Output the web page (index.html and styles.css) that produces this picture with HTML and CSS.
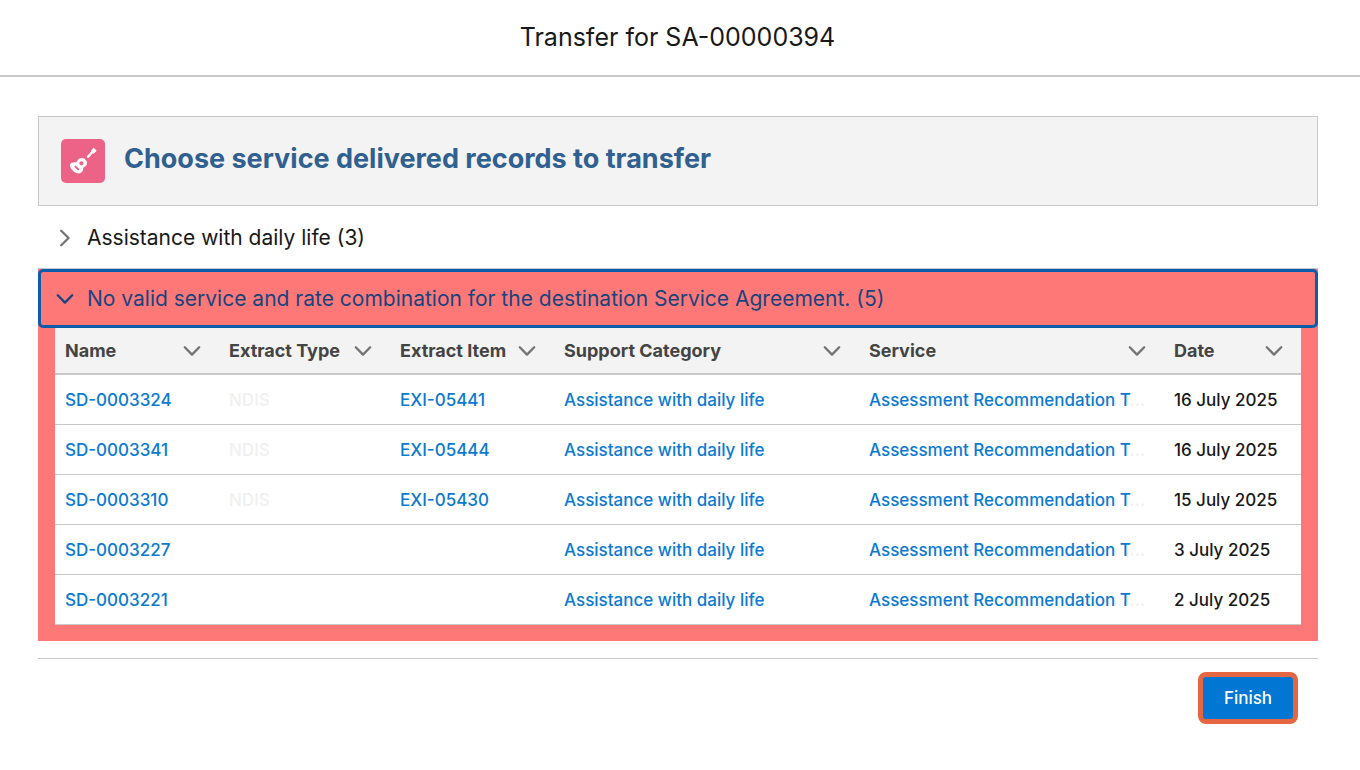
FILE: index.html
```html
<!DOCTYPE html>
<html lang="en">
<head>
<meta charset="utf-8">
<title>Transfer for SA-00000394</title>
<link rel="stylesheet" href="styles.css">
</head>
<body>
<svg class="defs" aria-hidden="true">
  <symbol id="chevron" viewBox="0 0 18 18"><path d="M1.800 5.200 9 12.600l7.200-7.400" fill="none" stroke="currentColor" stroke-width="2.300" stroke-linecap="round" stroke-linejoin="round"/></symbol>
</svg>
<header class="modal-header"><h1 class="modal-title">Transfer for SA-00000394</h1></header>
<main class="content">
  <div class="banner">
    <svg class="banner-icon" viewBox="0 0 44 44" aria-hidden="true">
      <path d="M27 17.800 31.800 12.500" fill="none" stroke="#fff" stroke-width="2.400" stroke-linecap="round"/>
      <path d="M30.300 12 32 9.600q.6-.6 1.200 0l1.600 1.700q.5.600-.1 1.200l-2.400 1.800Z" fill="#fff" stroke="#fff" stroke-width=".8" stroke-linejoin="round"/>
      <path fill-rule="evenodd" d="M16.400 21.800c.8-1.900 2.900-3 5-2.700 1.300.1 2.200.8 3 1.700 1 .9 1.700 2 1.600 3.300 0 1.800-1 3.300-2.700 4-.9.400-1.100 1-1.100 2-.1 1.500-.7 2.600-1.900 3.500-2 1.400-4.700 1.200-7-.5-1.900-1.400-3.600-3.400-4.200-5.500-.5-1.600.2-3.200 1.700-3.800 1.100-.5 2.300-.5 3.400-.6 1.300-.1 1.800-.4 2.200-1.400Zm4 .4a2.100 2.100 0 1 0 0 4.200 2.100 2.100 0 0 0 0-4.200Zm-6.400 4.500a1.100 1.100 0 0 0-.3 1.600l2.800 2.800c1.200.8 2.200-.4 1.500-1.400l-2.800-2.800q-.6-.5-1.200-.2Z" fill="#fff"/>
    </svg>
    <h2 class="banner-title">Choose service delivered records to transfer</h2>
  </div>
  <section>
    <button class="toggle" type="button" aria-expanded="false"><svg class="chevron chevron-right" aria-hidden="true"><use href="#chevron"/></svg>Assistance with daily life (3)</button>
  </section>
  <section class="invalid">
    <button class="toggle toggle-open" type="button" aria-expanded="true"><svg class="chevron" aria-hidden="true"><use href="#chevron"/></svg>No valid service and rate combination for the destination Service Agreement. (5)</button>
    <div class="table-wrap">
      <table class="records">
        <colgroup><col class="col-name"><col class="col-type"><col class="col-item"><col><col><col class="col-date"></colgroup>
        <thead><tr>
          <th scope="col"><div class="head">Name<svg class="chevron" aria-hidden="true"><use href="#chevron"/></svg></div></th>
          <th scope="col"><div class="head">Extract Type<svg class="chevron" aria-hidden="true"><use href="#chevron"/></svg></div></th>
          <th scope="col"><div class="head">Extract Item<svg class="chevron" aria-hidden="true"><use href="#chevron"/></svg></div></th>
          <th scope="col"><div class="head">Support Category<svg class="chevron" aria-hidden="true"><use href="#chevron"/></svg></div></th>
          <th scope="col"><div class="head">Service<svg class="chevron" aria-hidden="true"><use href="#chevron"/></svg></div></th>
          <th scope="col"><div class="head">Date<svg class="chevron" aria-hidden="true"><use href="#chevron"/></svg></div></th>
        </tr></thead>
        <tbody>
          <tr><td><a href="#">SD-0003324</a></td><td>NDIS</td><td><a href="#">EXI-05441</a></td><td><a href="#">Assistance with daily life</a></td><td><a href="#">Assessment Recommendation T</a>…</td><td class="date">16 July 2025</td></tr>
          <tr><td><a href="#">SD-0003341</a></td><td>NDIS</td><td><a href="#">EXI-05444</a></td><td><a href="#">Assistance with daily life</a></td><td><a href="#">Assessment Recommendation T</a>…</td><td class="date">16 July 2025</td></tr>
          <tr><td><a href="#">SD-0003310</a></td><td>NDIS</td><td><a href="#">EXI-05430</a></td><td><a href="#">Assistance with daily life</a></td><td><a href="#">Assessment Recommendation T</a>…</td><td class="date">15 July 2025</td></tr>
          <tr><td><a href="#">SD-0003227</a></td><td></td><td></td><td><a href="#">Assistance with daily life</a></td><td><a href="#">Assessment Recommendation T</a>…</td><td class="date">3 July 2025</td></tr>
          <tr><td><a href="#">SD-0003221</a></td><td></td><td></td><td><a href="#">Assistance with daily life</a></td><td><a href="#">Assessment Recommendation T</a>…</td><td class="date">2 July 2025</td></tr>
        </tbody>
      </table>
    </div>
  </section>
  <footer class="actions"><button class="finish" type="button">Finish</button></footer>
</main>
</body>
</html>
```

FILE: styles.css
```css
* { box-sizing: border-box; }
body { margin: 0; background: #fff; color: #181818; font-family: Inter, "Liberation Sans", sans-serif; font-size: 17px; }
.defs { display: none; }
.modal-header { padding: 21px 5px 21px 0; border-bottom: 2px solid #c9c9c9; text-align: center; }
.modal-title { margin: 0; font-size: 25px; line-height: 33px; font-weight: 400; }
.content { padding: 39px 42px 40px 38px; }
.banner { display: flex; align-items: flex-start; gap: 19px; padding: 22px; background: #f3f3f3; border: 1px solid #c9c9c9; }
.banner-icon { width: 44px; height: 44px; border-radius: 5px; background: #ed6387; flex: none; }
.banner-title { margin: 0; font-size: 27px; line-height: 40px; font-weight: 700; color: #2f6090; }
.toggle { display: flex; align-items: center; gap: 13px; width: 100%; padding: 15px 18px 14px; border: 0; background: none; color: #181818; font-family: inherit; font-size: 21px; line-height: 33px; text-align: left; cursor: pointer; }
.chevron { width: 18px; height: 18px; color: #747474; flex: none; }
.chevron-right { transform: rotate(-90deg); }
.invalid { background: #ff7878; border-top: 1px solid #c9c9c9; padding-bottom: 16px; }
.toggle-open { padding: 10px 15px; border: 3px solid #0b5cab; border-radius: 5px; color: #17447e; }
.toggle-open .chevron { color: #17447e; }
.table-wrap { margin: 0 17px; background: #fff; }
.records { width: 100%; table-layout: fixed; border-collapse: separate; border-spacing: 0; }
.col-name, .col-item { width: 164px; }
.col-type { width: 171px; }
.col-date { width: 137px; }
.records th { height: 47px; padding: 0 18px 0 10px; background: #f3f3f3; border-bottom: 2px solid #c9c9c9; color: #444; font-size: 18px; font-weight: 700; text-align: left; white-space: nowrap; }
.head { display: flex; align-items: center; justify-content: space-between; }
.records td { height: 50px; padding: 0 12px 0 10px; border-bottom: 1px solid #c9c9c9; color: #f0f0f0; font-weight: 500; white-space: nowrap; }
.records a { color: #0b7ad1; text-decoration: none; }
.records .date { color: #181818; }
.actions { display: flex; justify-content: flex-end; margin-top: 17px; padding: 13px 20px 0; border-top: 1px solid #c9c9c9; }
.finish { height: 52px; padding: 0 20px; border: 5px solid #e66641; border-radius: 8px; background: #0176d3; color: #fff; font-family: inherit; font-size: 17px; font-weight: 500; min-width: 100px; cursor: pointer; }
```
